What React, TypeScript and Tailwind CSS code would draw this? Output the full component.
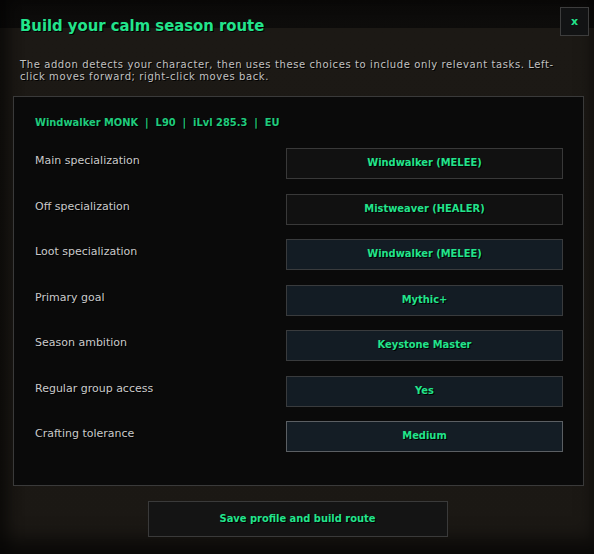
const rows = [
  { label: "Main specialization", value: "Windwalker (MELEE)", tone: "plain" },
  { label: "Off specialization", value: "Mistweaver (HEALER)", tone: "plain" },
  { label: "Loot specialization", value: "Windwalker (MELEE)", tone: "blue" },
  { label: "Primary goal", value: "Mythic+", tone: "blue" },
  { label: "Season ambition", value: "Keystone Master", tone: "blue" },
  { label: "Regular group access", value: "Yes", tone: "blue" },
  { label: "Crafting tolerance", value: "Medium", tone: "active" },
]

const boxTone: Record<string, string> = {
  plain: "bg-[#111111] border-[#393939]",
  blue: "bg-[#131c24] border-[#393b3d]",
  active: "bg-[#141d25] border-[#5b5f63]",
}

export default function App() {
  return (
    <div
      className="relative w-[594px] h-[554px] overflow-hidden bg-[linear-gradient(to_bottom,#0b0a09_0,#0d0c0b_28px,#1c1915_28px,#1b1814_100%)] shadow-[inset_0_-16px_18px_rgba(0,0,0,0.55),inset_10px_0_14px_rgba(0,0,0,0.35)]"
      style={{ fontFamily: '"DejaVu Sans", Verdana, sans-serif' }}
    >
      <div className="px-[20px] pt-[16px] text-[16.5px] leading-[20px] font-bold font-stretch-condensed text-[#22e48c] [text-shadow:1px_1px_0_#000]">
        Build your calm season route
      </div>

      <button className="absolute top-[7px] right-[5px] w-[29px] h-[29px] border border-[#3d3d3d] bg-[#121314] text-[11px] font-bold text-[#22e48c] leading-none">
        x
      </button>

      <p className="mt-[23px] pl-[20px] pr-[30px] text-[10px] leading-[12px] tracking-[0.6px] text-[#c2c2c2] [text-shadow:1px_1px_0_#000]">
        The addon detects your character, then uses these choices to include only relevant tasks. Left-click moves forward; right-click moves back.
      </p>

      <div className="ml-[13px] mr-[10px] mt-[13px] h-[390px] border border-[#3a3a3a] bg-[#0a0a0a] pl-[21px] pr-[20px] pt-[19px]">
        <div className="text-[11px] leading-[14px] font-bold font-stretch-condensed text-[#1fcb7c] [text-shadow:1px_1px_0_#000] whitespace-pre">
          {"Windwalker MONK  |  L90  |  iLvl 285.3  |  EU"}
        </div>
        <div className="mt-[18px] flex flex-col gap-[14.5px]">
          {rows.map((r) => (
            <div key={r.label} className="flex items-start justify-between">
              <span className="pt-[6px] text-[11px] leading-[14px] text-[#cacaca] [text-shadow:1px_1px_0_#000]">
                {r.label}
              </span>
              <div
                className={`w-[277px] h-[31px] border flex items-center justify-center text-[11px] font-bold font-stretch-condensed text-[#22e48c] [text-shadow:1px_1px_0_#000] ${boxTone[r.tone]}`}
              >
                {r.value}
              </div>
            </div>
          ))}
        </div>
      </div>

      <div className="mt-[15px] flex justify-center pl-[1px]">
        <button className="w-[300px] h-[36px] border border-[#3a3a3a] bg-[#141414] text-[11px] font-bold font-stretch-condensed text-[#22e48c] [text-shadow:1px_1px_0_#000]">
          Save profile and build route
        </button>
      </div>
    </div>
  )
}
